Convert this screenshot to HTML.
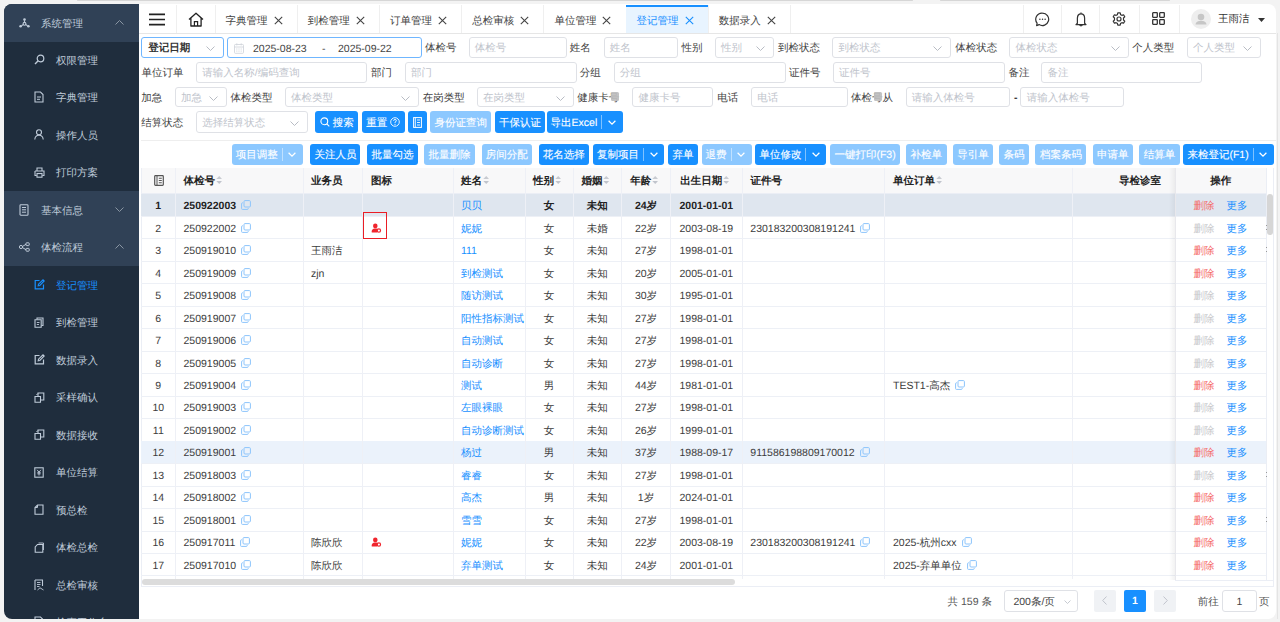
<!DOCTYPE html><html><head><meta charset="utf-8"><title>登记管理</title><style>
*{box-sizing:border-box;margin:0;padding:0}
html,body{width:1280px;height:622px;overflow:hidden}
body{position:relative;background:#f3f3f3;font-family:"Liberation Sans",sans-serif;font-size:10.5px;text-rendering:geometricPrecision;color:#606266}
.a{position:absolute}
.t{position:absolute;white-space:nowrap;line-height:12px;margin-top:1px}
svg{display:block}
.side{left:4px;top:4px;width:135px;height:615px;background:#1f2d3d;border-radius:8px 0 0 8px;overflow:hidden}
.sh{position:absolute;left:0;width:135px;height:37.5px;background:#304156}
.sm{color:#bfcbd9}
.main{left:139px;top:4px;width:1137px;height:615px;background:#fff;border-radius:0 8px 8px 0;overflow:hidden}
.vsep{position:absolute;top:1px;width:1px;height:28px;background:#efefef}
.tabt{color:#444}
.lbl{color:#444}
.inp{position:absolute;border:1px solid #dfe1e6;border-radius:3px;background:#fff}
.ph{color:#c0c4cc}
.btn{position:absolute;background:#1890ff;border-radius:3px;color:#fff;-webkit-text-stroke:0.12px #fff}
.btn.dis{background:#8cc8ff}
.th{color:#222;font-weight:bold}
.td{color:#3c3c3c}
.lnk{color:#1890ff}
</style></head><body>
<div class="a " style="left:77px;top:0px;width:836px;height:1.3px;background:#d6d6d6;border-radius:1px"></div>
<div class="a " style="left:940px;top:0px;width:230px;height:1.3px;background:#d6d6d6;border-radius:1px"></div>
<div class="a side"><div class="sh" style="top:0px"></div><div class="a" style="left:15px;top:12.75px;height:12px;display:flex;align-items:center"><svg width="11" height="10" viewBox="0 0 11 10"><circle cx="5.5" cy="1.6" r="1.3" fill="#bfcbd9"/><circle cx="1.6" cy="8.2" r="1.3" fill="#bfcbd9"/><circle cx="9.4" cy="8.2" r="1.3" fill="#bfcbd9"/><circle cx="5.5" cy="5.8" r="1.4" fill="none" stroke="#bfcbd9" stroke-width="1.1"/><path d="M5.5 2.5V4.4M4.4 6.6L2.4 7.7M6.6 6.6L8.6 7.7" stroke="#bfcbd9" stroke-width="1.1"/></svg></div><div class="t sm" style="left:37px;top:12.75px;">系统管理</div><div class="a" style="left:111px;top:15.75px"><svg width="9" height="5" viewBox="0 0 9 5"><path d="M0.5 4.5L4.5 0.5L8.5 4.5" fill="none" stroke="#8a96a3" stroke-width="1"/></svg></div><div class="a" style="left:30px;top:49.75px;height:12px;display:flex;align-items:center"><svg width="11" height="11" viewBox="0 0 11 11"><circle cx="6.5" cy="4.5" r="3.3" fill="none" stroke="#bfcbd9" stroke-width="1.2"/><path d="M4.2 6.8L1 10" stroke="#bfcbd9" stroke-width="1.4"/></svg></div><div class="t sm" style="left:52px;top:49.75px;">权限管理</div><div class="a" style="left:30px;top:87.25px;height:12px;display:flex;align-items:center"><svg width="10" height="12" viewBox="0 0 10 12"><path d="M1 1H6.5L9 3.5V11H1Z" fill="none" stroke="#bfcbd9" stroke-width="1.1"/><path d="M3 6H7M3 8.3H6" stroke="#bfcbd9" stroke-width="1"/></svg></div><div class="t sm" style="left:52px;top:87.25px;">字典管理</div><div class="a" style="left:30px;top:124.75px;height:12px;display:flex;align-items:center"><svg width="10" height="11" viewBox="0 0 10 11"><circle cx="5" cy="3.3" r="2.5" fill="none" stroke="#bfcbd9" stroke-width="1.1"/><path d="M0.8 10.5C1 7.5 2.8 6.3 5 6.3S9 7.5 9.2 10.5" fill="none" stroke="#bfcbd9" stroke-width="1.1"/></svg></div><div class="t sm" style="left:52px;top:124.75px;">操作人员</div><div class="a" style="left:30px;top:162.25px;height:12px;display:flex;align-items:center"><svg width="11" height="11" viewBox="0 0 11 11"><path d="M3 3.5V1H8V3.5M1 4H10V8.5H8.3M2.7 8.5H1V4" fill="none" stroke="#bfcbd9" stroke-width="1.1"/><rect x="3" y="6.5" width="5" height="3.7" fill="none" stroke="#bfcbd9" stroke-width="1.1"/></svg></div><div class="t sm" style="left:52px;top:162.25px;">打印方案</div><div class="sh" style="top:187px"></div><div class="a" style="left:15px;top:199.75px;height:12px;display:flex;align-items:center"><svg width="10" height="12" viewBox="0 0 10 12"><rect x="1" y="0.8" width="8" height="10.4" rx="0.8" fill="none" stroke="#bfcbd9" stroke-width="1.1"/><path d="M3 3.5H7M3 5.8H7M3 8.2H7" stroke="#bfcbd9" stroke-width="1"/></svg></div><div class="t sm" style="left:37px;top:199.75px;">基本信息</div><div class="a" style="left:111px;top:202.75px"><svg width="9" height="5" viewBox="0 0 9 5"><path d="M0.5 0.5L4.5 4.5L8.5 0.5" fill="none" stroke="#8a96a3" stroke-width="1"/></svg></div><div class="sh" style="top:224.5px"></div><div class="a" style="left:15px;top:237.25px;height:12px;display:flex;align-items:center"><svg width="11" height="10" viewBox="0 0 11 10"><circle cx="2" cy="5" r="1.6" fill="none" stroke="#bfcbd9" stroke-width="1"/><rect x="7" y="0.8" width="3.2" height="2.8" rx="0.6" fill="none" stroke="#bfcbd9" stroke-width="1"/><rect x="7" y="6.4" width="3.2" height="2.8" rx="0.6" fill="none" stroke="#bfcbd9" stroke-width="1"/><path d="M3.5 4.4L7 2.3M3.5 5.6L7 7.7" stroke="#bfcbd9" stroke-width="1"/></svg></div><div class="t sm" style="left:37px;top:237.25px;">体检流程</div><div class="a" style="left:111px;top:240.25px"><svg width="9" height="5" viewBox="0 0 9 5"><path d="M0.5 4.5L4.5 0.5L8.5 4.5" fill="none" stroke="#8a96a3" stroke-width="1"/></svg></div><div class="a" style="left:30px;top:274.75px;height:12px;display:flex;align-items:center"><svg width="11" height="11" viewBox="0 0 11 11"><path d="M5.5 1.5H1.2V9.8H9.5V5.5" fill="none" stroke="#1890ff" stroke-width="1.2"/><path d="M4.2 6.8L4.5 5.2L9 0.8L10.2 2L5.8 6.5Z" fill="none" stroke="#1890ff" stroke-width="1.1"/></svg></div><div class="t sm" style="left:52px;top:274.75px;color:#1890ff;">登记管理</div><div class="a" style="left:30px;top:312.25px;height:12px;display:flex;align-items:center"><svg width="10" height="11" viewBox="0 0 10 11"><path d="M3 2.5V1H9V8.5H7.5" fill="none" stroke="#bfcbd9" stroke-width="1.1"/><path d="M1 2.8H7.2V10.2H1Z" fill="none" stroke="#bfcbd9" stroke-width="1.1"/><path d="M2.8 5.5H5.5M2.8 7.5H5" stroke="#bfcbd9" stroke-width="0.9"/></svg></div><div class="t sm" style="left:52px;top:312.25px;">到检管理</div><div class="a" style="left:30px;top:349.75px;height:12px;display:flex;align-items:center"><svg width="11" height="11" viewBox="0 0 11 11"><path d="M5.5 1.5H1.2V9.8H9.5V5.5" fill="none" stroke="#bfcbd9" stroke-width="1.2"/><path d="M4.2 6.8L4.5 5.2L9 0.8L10.2 2L5.8 6.5Z" fill="none" stroke="#bfcbd9" stroke-width="1.1"/></svg></div><div class="t sm" style="left:52px;top:349.75px;">数据录入</div><div class="a" style="left:30px;top:387.25px;height:12px;display:flex;align-items:center"><svg width="11" height="11" viewBox="0 0 11 11"><path d="M1 4.5H6.5V10.2H1Z" fill="none" stroke="#bfcbd9" stroke-width="1.1"/><path d="M4 4.5V1H9.8V8H6.5" fill="none" stroke="#bfcbd9" stroke-width="1.1"/><path d="M2.5 3L3.8 1.5" stroke="#bfcbd9" stroke-width="1"/></svg></div><div class="t sm" style="left:52px;top:387.25px;">采样确认</div><div class="a" style="left:30px;top:424.75px;height:12px;display:flex;align-items:center"><svg width="11" height="11" viewBox="0 0 11 11"><path d="M1 4.5H6.5V10.2H1Z" fill="none" stroke="#bfcbd9" stroke-width="1.1"/><path d="M4 4.5V1H9.8V8H6.5" fill="none" stroke="#bfcbd9" stroke-width="1.1"/><path d="M2.5 3L3.8 1.5" stroke="#bfcbd9" stroke-width="1"/></svg></div><div class="t sm" style="left:52px;top:424.75px;">数据接收</div><div class="a" style="left:30px;top:462.25px;height:12px;display:flex;align-items:center"><svg width="10" height="11" viewBox="0 0 10 11"><rect x="0.8" y="0.8" width="8.4" height="9.4" fill="none" stroke="#bfcbd9" stroke-width="1.1"/><path d="M3 2.8L5 5L7 2.8M5 5V8.5M3.3 5.3H6.7M3.3 6.8H6.7" fill="none" stroke="#bfcbd9" stroke-width="0.9"/></svg></div><div class="t sm" style="left:52px;top:462.25px;">单位结算</div><div class="a" style="left:30px;top:499.75px;height:12px;display:flex;align-items:center"><svg width="10" height="11" viewBox="0 0 10 11"><path d="M3.5 1H9V10.2H1V3.5Z" fill="none" stroke="#bfcbd9" stroke-width="1.1"/><path d="M3.5 1V3.5H1" fill="none" stroke="#bfcbd9" stroke-width="1"/></svg></div><div class="t sm" style="left:52px;top:499.75px;">预总检</div><div class="a" style="left:30px;top:537.25px;height:12px;display:flex;align-items:center"><svg width="10" height="11" viewBox="0 0 10 11"><path d="M3.5 2.5H8.8V10.2H1.2V5Z" fill="none" stroke="#bfcbd9" stroke-width="1.1"/><path d="M4.5 1H9.5V8" fill="none" stroke="#bfcbd9" stroke-width="0.9"/></svg></div><div class="t sm" style="left:52px;top:537.25px;">体检总检</div><div class="a" style="left:30px;top:574.75px;height:12px;display:flex;align-items:center"><svg width="10" height="12" viewBox="0 0 10 12"><path d="M1 1H8.5V7M1 1V11" fill="none" stroke="#bfcbd9" stroke-width="1.1"/><path d="M3 3.5H6.5M3 5.5H6.5M3 7.5H5.5M3.5 11L6 8.8L9.5 11" fill="none" stroke="#bfcbd9" stroke-width="0.9"/></svg></div><div class="t sm" style="left:52px;top:574.75px;">总检审核</div><div class="a" style="left:30px;top:612.25px;height:12px;display:flex;align-items:center"><svg width="10" height="12" viewBox="0 0 10 12"><path d="M1 1H6.5L9 3.5V11H1Z" fill="none" stroke="#bfcbd9" stroke-width="1.1"/><path d="M3 6H7M3 8.3H6" stroke="#bfcbd9" stroke-width="1"/></svg></div><div class="t sm" style="left:52px;top:612.25px;">检查工作台</div></div>
<div class="a main"><div class="a " style="left:0px;top:29px;width:1137px;height:1px;background:#e6e6e6"></div><div class="vsep" style="left:37.30000000000001px"></div><div class="vsep" style="left:75.5px"></div><div class="vsep" style="left:157.7px"></div><div class="vsep" style="left:239.89999999999998px"></div><div class="vsep" style="left:322.1px"></div><div class="vsep" style="left:404.29999999999995px"></div><div class="vsep" style="left:486.5px"></div><div class="vsep" style="left:568.7px"></div><div class="vsep" style="left:650.9px"></div><div class="vsep" style="left:883.5px"></div><div class="vsep" style="left:922px"></div><div class="vsep" style="left:960px"></div><div class="vsep" style="left:999.8px"></div><div class="vsep" style="left:1040px"></div><div class="a " style="left:10px;top:9px;width:16px;height:13px;"><svg width="16" height="13" viewBox="0 0 16 13"><path d="M0 1.3H16M0 6.5H16M0 11.7H16" stroke="#222" stroke-width="1.7"/></svg></div><div class="a " style="left:48.5px;top:7.5px;width:16px;height:15px;"><svg width="16" height="15" viewBox="0 0 16 15"><path d="M1 7.5L8 1.2L15 7.5M2.9 5.8V14H13.1V5.8" fill="none" stroke="#222" stroke-width="1.3" stroke-linejoin="round"/><path d="M6.4 14V9.6H9.6V14" fill="none" stroke="#222" stroke-width="1.2"/></svg></div><div class="t " style="left:86.6px;top:9.5px;color:#444">字典管理</div><div class="a " style="left:134.6px;top:11.5px;width:9px;height:9px;"><svg width="9" height="9" viewBox="0 0 9 9"><path d="M0.8 0.8L8.2 8.2M8.2 0.8L0.8 8.2" stroke="#444" stroke-width="1.1"/></svg></div><div class="t " style="left:168.8px;top:9.5px;color:#444">到检管理</div><div class="a " style="left:216.8px;top:11.5px;width:9px;height:9px;"><svg width="9" height="9" viewBox="0 0 9 9"><path d="M0.8 0.8L8.2 8.2M8.2 0.8L0.8 8.2" stroke="#444" stroke-width="1.1"/></svg></div><div class="t " style="left:251.0px;top:9.5px;color:#444">订单管理</div><div class="a " style="left:299.0px;top:11.5px;width:9px;height:9px;"><svg width="9" height="9" viewBox="0 0 9 9"><path d="M0.8 0.8L8.2 8.2M8.2 0.8L0.8 8.2" stroke="#444" stroke-width="1.1"/></svg></div><div class="t " style="left:333.2px;top:9.5px;color:#444">总检审核</div><div class="a " style="left:381.2px;top:11.5px;width:9px;height:9px;"><svg width="9" height="9" viewBox="0 0 9 9"><path d="M0.8 0.8L8.2 8.2M8.2 0.8L0.8 8.2" stroke="#444" stroke-width="1.1"/></svg></div><div class="t " style="left:415.4px;top:9.5px;color:#444">单位管理</div><div class="a " style="left:463.4px;top:11.5px;width:9px;height:9px;"><svg width="9" height="9" viewBox="0 0 9 9"><path d="M0.8 0.8L8.2 8.2M8.2 0.8L0.8 8.2" stroke="#444" stroke-width="1.1"/></svg></div><div class="a " style="left:487px;top:0.5px;width:82.2px;height:28.5px;background:#e8f4ff"></div><div class="a " style="left:487px;top:0.5px;width:82.2px;height:2px;background:#1890ff"></div><div class="t " style="left:497.6px;top:9.5px;color:#1890ff">登记管理</div><div class="a " style="left:545.6px;top:11.5px;width:9px;height:9px;"><svg width="9" height="9" viewBox="0 0 9 9"><path d="M0.8 0.8L8.2 8.2M8.2 0.8L0.8 8.2" stroke="#1890ff" stroke-width="1.1"/></svg></div><div class="t " style="left:579.8px;top:9.5px;color:#444">数据录入</div><div class="a " style="left:627.8px;top:11.5px;width:9px;height:9px;"><svg width="9" height="9" viewBox="0 0 9 9"><path d="M0.8 0.8L8.2 8.2M8.2 0.8L0.8 8.2" stroke="#444" stroke-width="1.1"/></svg></div><div class="a " style="left:895.5px;top:7.5px;width:15px;height:15px;"><svg width="15" height="15" viewBox="0 0 15 15"><path d="M7.5 1.1A6.3 6.2 0 1 1 4.1 12.6L1.6 13.6L2.1 11.1A6.2 6.2 0 0 1 7.5 1.1Z" fill="none" stroke="#333" stroke-width="1.2" stroke-linejoin="round"/><circle cx="4.9" cy="7.3" r="0.75" fill="#333"/><circle cx="7.5" cy="7.3" r="0.75" fill="#333"/><circle cx="10.1" cy="7.3" r="0.75" fill="#333"/></svg></div><div class="a " style="left:936px;top:8px;width:12px;height:15px;"><svg width="12" height="15" viewBox="0 0 12 15"><path d="M6 1.8C3.7 1.8 2.4 3.8 2.4 6.2V11.2L1 12.6H11L9.6 11.2V6.2C9.6 3.8 8.3 1.8 6 1.8Z" fill="none" stroke="#333" stroke-width="1.25" stroke-linejoin="round"/><path d="M6 0.6V1.8" stroke="#333" stroke-width="1.2"/><path d="M4.6 13.4Q6 14.8 7.4 13.4Z" fill="#333" stroke="#333" stroke-width="0.8"/></svg></div><div class="a " style="left:972.8px;top:7.5px;width:14px;height:14px;"><svg width="14" height="14" viewBox="0 0 16 16"><path d="M6.6 1H9.4L9.8 3A5.2 5.2 0 0 1 11.3 3.9L13.2 3.2L14.6 5.6L13.1 6.9A5.2 5.2 0 0 1 13.1 9.1L14.6 10.4L13.2 12.8L11.3 12.1A5.2 5.2 0 0 1 9.8 13L9.4 15H6.6L6.2 13A5.2 5.2 0 0 1 4.7 12.1L2.8 12.8L1.4 10.4L2.9 9.1A5.2 5.2 0 0 1 2.9 6.9L1.4 5.6L2.8 3.2L4.7 3.9A5.2 5.2 0 0 1 6.2 3Z" fill="none" stroke="#333" stroke-width="1.35" stroke-linejoin="round"/><circle cx="8" cy="8" r="2.3" fill="none" stroke="#333" stroke-width="1.35"/></svg></div><div class="a " style="left:1013.3px;top:8.3px;width:13px;height:13px;"><svg width="13" height="13" viewBox="0 0 13 13"><rect x="0.7" y="0.7" width="4.6" height="4.6" rx="0.5" fill="none" stroke="#333" stroke-width="1.3"/><rect x="7.7" y="0.7" width="4.6" height="4.6" rx="0.5" fill="none" stroke="#333" stroke-width="1.3"/><rect x="0.7" y="7.7" width="4.6" height="4.6" rx="0.5" fill="none" stroke="#333" stroke-width="1.3"/><rect x="7.7" y="7.7" width="4.6" height="4.6" rx="0.5" fill="none" stroke="#333" stroke-width="1.3"/></svg></div><div class="a " style="left:1052px;top:5px;width:20px;height:20px;border-radius:50%;background:#eeeeee;overflow:hidden"><svg width="20" height="20" viewBox="0 0 20 20"><circle cx="10" cy="8" r="3.3" fill="#c6c6c6"/><path d="M4.5 15.5Q5 11.8 10 11.8T15.5 15.5Z" fill="#c6c6c6"/></svg></div><div class="t " style="left:1079px;top:8.3px;color:#333">王雨洁</div><div class="a " style="left:1118.5px;top:13.5px;width:7px;height:4px;"><svg width="7" height="4" viewBox="0 0 7 4"><path d="M0 0H7L3.5 4Z" fill="#333"/></svg></div><div class="inp" style="left:2.2px;top:33.2px;width:82.8px;height:20.5px;border-color:#6fb6ff"><div class="t" style="left:6px;top:3.25px;color:#333;font-weight:bold;">登记日期</div><div class="a" style="right:8px;top:8.25px"><svg width="9" height="5" viewBox="0 0 9 5"><path d="M0.5 0.5L4.5 4.5L8.5 0.5" fill="none" stroke="#b8bcc4" stroke-width="1"/></svg></div></div><div class="inp" style="left:88px;top:33.2px;width:194.5px;height:20.5px;border-color:#6fb6ff"><div class="a" style="left:5.6px;top:4.6px"><svg width="10" height="11" viewBox="0 0 10 11"><rect x="0.5" y="1.5" width="9" height="8.8" rx="0.8" fill="none" stroke="#d3d6dc" stroke-width="0.9"/><path d="M0.5 4H9.5M2.8 0.3V2.4M7.2 0.3V2.4" stroke="#d3d6dc" stroke-width="0.9"/><path d="M2.2 6H3.4M4.4 6H5.6M6.6 6H7.8M2.2 8.1H3.4M4.4 8.1H5.6M6.6 8.1H7.8" stroke="#d3d6dc" stroke-width="0.9"/></svg></div><div class="t" style="left:25px;top:3.5px;color:#444">2025-08-23</div><div class="t" style="left:94px;top:3.5px;color:#444">-</div><div class="t" style="left:110px;top:3.5px;color:#444">2025-09-22</div></div><div class="t lbl" style="left:286px;top:37.45px;">体检号</div><div class="inp" style="left:329.5px;top:33.2px;width:98.0px;height:20.5px;border-color:#dfe1e6"><div class="t ph" style="left:5.3px;top:3.25px">体检号</div></div><div class="t lbl" style="left:430.8px;top:37.45px;">姓名</div><div class="inp" style="left:464.5px;top:33.2px;width:74.3px;height:20.5px;border-color:#dfe1e6"><div class="t ph" style="left:5.3px;top:3.25px">姓名</div></div><div class="t lbl" style="left:542.5px;top:37.45px;">性别</div><div class="inp" style="left:575.8px;top:33.2px;width:59.5px;height:20.5px;border-color:#dfe1e6"><div class="t ph" style="left:5.3px;top:3.25px">性别</div><div class="a" style="right:8px;top:8.25px"><svg width="9" height="5" viewBox="0 0 9 5"><path d="M0.5 0.5L4.5 4.5L8.5 0.5" fill="none" stroke="#b8bcc4" stroke-width="1"/></svg></div></div><div class="t lbl" style="left:639px;top:37.45px;">到检状态</div><div class="inp" style="left:693.3px;top:33.2px;width:119.2px;height:20.5px;border-color:#dfe1e6"><div class="t ph" style="left:5.3px;top:3.25px">到检状态</div><div class="a" style="right:8px;top:8.25px"><svg width="9" height="5" viewBox="0 0 9 5"><path d="M0.5 0.5L4.5 4.5L8.5 0.5" fill="none" stroke="#b8bcc4" stroke-width="1"/></svg></div></div><div class="t lbl" style="left:816.3px;top:37.45px;">体检状态</div><div class="inp" style="left:870.3px;top:33.2px;width:119.9px;height:20.5px;border-color:#dfe1e6"><div class="t ph" style="left:5.3px;top:3.25px">体检状态</div><div class="a" style="right:8px;top:8.25px"><svg width="9" height="5" viewBox="0 0 9 5"><path d="M0.5 0.5L4.5 4.5L8.5 0.5" fill="none" stroke="#b8bcc4" stroke-width="1"/></svg></div></div><div class="t lbl" style="left:993.3px;top:37.45px;">个人类型</div><div class="inp" style="left:1047.7px;top:33.2px;width:74.3px;height:20.5px;border-color:#dfe1e6"><div class="t ph" style="left:5.3px;top:3.25px">个人类型</div><div class="a" style="right:8px;top:8.25px"><svg width="9" height="5" viewBox="0 0 9 5"><path d="M0.5 0.5L4.5 4.5L8.5 0.5" fill="none" stroke="#b8bcc4" stroke-width="1"/></svg></div></div><div class="t lbl" style="left:2.4px;top:62.45px;">单位订单</div><div class="inp" style="left:57px;top:58.2px;width:171.3px;height:20.5px;border-color:#dfe1e6"><div class="t ph" style="left:5.3px;top:3.25px">请输入名称/编码查询</div></div><div class="t lbl" style="left:232px;top:62.45px;">部门</div><div class="inp" style="left:265.8px;top:58.2px;width:172.0px;height:20.5px;border-color:#dfe1e6"><div class="t ph" style="left:5.3px;top:3.25px">部门</div></div><div class="t lbl" style="left:440.8px;top:62.45px;">分组</div><div class="inp" style="left:474.5px;top:58.2px;width:172.0px;height:20.5px;border-color:#dfe1e6"><div class="t ph" style="left:5.3px;top:3.25px">分组</div></div><div class="t lbl" style="left:650px;top:62.45px;">证件号</div><div class="inp" style="left:693.8px;top:58.2px;width:172.5px;height:20.5px;border-color:#dfe1e6"><div class="t ph" style="left:5.3px;top:3.25px">证件号</div></div><div class="t lbl" style="left:869.5px;top:62.45px;">备注</div><div class="inp" style="left:902.3px;top:58.2px;width:161.1px;height:20.5px;border-color:#dfe1e6"><div class="t ph" style="left:5.3px;top:3.25px">备注</div></div><div class="t lbl" style="left:2.2px;top:86.75px;">加急</div><div class="inp" style="left:35.8px;top:82.5px;width:52.5px;height:20.5px;border-color:#dfe1e6"><div class="t ph" style="left:5.3px;top:3.25px">加急</div><div class="a" style="right:8px;top:8.25px"><svg width="9" height="5" viewBox="0 0 9 5"><path d="M0.5 0.5L4.5 4.5L8.5 0.5" fill="none" stroke="#b8bcc4" stroke-width="1"/></svg></div></div><div class="t lbl" style="left:91.5px;top:86.75px;">体检类型</div><div class="inp" style="left:145.8px;top:82.5px;width:134.2px;height:20.5px;border-color:#dfe1e6"><div class="t ph" style="left:5.3px;top:3.25px">体检类型</div><div class="a" style="right:8px;top:8.25px"><svg width="9" height="5" viewBox="0 0 9 5"><path d="M0.5 0.5L4.5 4.5L8.5 0.5" fill="none" stroke="#b8bcc4" stroke-width="1"/></svg></div></div><div class="t lbl" style="left:283.8px;top:86.75px;">在岗类型</div><div class="inp" style="left:337.8px;top:82.5px;width:97.5px;height:20.5px;border-color:#dfe1e6"><div class="t ph" style="left:5.3px;top:3.25px">在岗类型</div><div class="a" style="right:8px;top:8.25px"><svg width="9" height="5" viewBox="0 0 9 5"><path d="M0.5 0.5L4.5 4.5L8.5 0.5" fill="none" stroke="#b8bcc4" stroke-width="1"/></svg></div></div><div class="t lbl" style="left:438.3px;top:86.75px;">健康卡号</div><div class="inp" style="left:493.3px;top:82.5px;width:81.2px;height:20.5px;border-color:#dfe1e6"><div class="t ph" style="left:5.3px;top:3.25px">健康卡号</div></div><div class="a " style="left:471.8px;top:88.3px;width:8.5px;height:9px;background:rgba(190,190,190,0.92);border-radius:1.5px"></div><div class="t lbl" style="left:578.3px;top:86.75px;">电话</div><div class="inp" style="left:612px;top:82.5px;width:96.8px;height:20.5px;border-color:#dfe1e6"><div class="t ph" style="left:5.3px;top:3.25px">电话</div></div><div class="t lbl" style="left:712px;top:86.75px;">体检号从</div><div class="inp" style="left:766.5px;top:82.5px;width:104.8px;height:20.5px;border-color:#dfe1e6"><div class="t ph" style="left:5.3px;top:3.25px">请输入体检号</div></div><div class="a " style="left:734.9px;top:88.3px;width:8.5px;height:9px;background:rgba(190,190,190,0.92);border-radius:1.5px"></div><div class="t " style="left:875px;top:86.75px;color:#333;font-weight:bold">-</div><div class="inp" style="left:881.4px;top:82.5px;width:104.1px;height:20.5px;border-color:#dfe1e6"><div class="t ph" style="left:5.3px;top:3.25px">请输入体检号</div></div><div class="t lbl" style="left:2.2px;top:112.05px;">结算状态</div><div class="inp" style="left:57px;top:107.3px;width:111.8px;height:21.5px;border-color:#dfe1e6"><div class="t ph" style="left:5.3px;top:3.75px">选择结算状态</div><div class="a" style="right:8px;top:8.75px"><svg width="9" height="5" viewBox="0 0 9 5"><path d="M0.5 0.5L4.5 4.5L8.5 0.5" fill="none" stroke="#b8bcc4" stroke-width="1"/></svg></div></div><div class="btn" style="left:175.8px;top:107.3px;width:43.7px;height:21.5px"><div class="t" style="left:0;width:43.69999999999999px;text-align:center;top:4.75px"><span style="display:inline-block;vertical-align:-1px;margin-right:3px"><svg width="10" height="10" viewBox="0 0 10 10"><circle cx="4.3" cy="4.3" r="3.4" fill="none" stroke="#fff" stroke-width="1.1"/><path d="M6.8 6.8L9.3 9.3" stroke="#fff" stroke-width="1.1"/></svg></span>搜索</div></div><div class="btn" style="left:222.5px;top:107.3px;width:43.3px;height:21.5px"><div class="t" style="left:0;width:43.30000000000001px;text-align:center;top:4.75px">重置<span style="display:inline-block;vertical-align:-1px;margin-left:3px"><svg width="10" height="10" viewBox="0 0 10 10"><circle cx="5" cy="5" r="4.3" fill="none" stroke="#fff" stroke-width="0.9"/><path d="M3.6 3.8Q3.6 2.5 5 2.5T6.4 3.7Q6.4 4.5 5 5.2V6.2" fill="none" stroke="#fff" stroke-width="0.9"/><circle cx="5" cy="7.6" r="0.55" fill="#fff"/></svg></span></div></div><div class="btn" style="left:269px;top:107.3px;width:19.3px;height:21.5px"><div class="t" style="left:0;width:19.30000000000001px;text-align:center;top:4.75px"><span style="display:inline-block;vertical-align:-1px"><svg width="9" height="11" viewBox="0 0 9 11"><rect x="0.6" y="0.6" width="7.8" height="9.8" fill="none" stroke="#fff" stroke-width="1"/><path d="M2.3 0.6V10.4M4 3H7M4 5.5H7M4 8H7" stroke="#fff" stroke-width="0.9"/></svg></span></div></div><div class="btn dis" style="left:291.3px;top:107.3px;width:60.7px;height:21.5px"><div class="t" style="left:0;width:60.69999999999999px;text-align:center;top:4.75px">身份证查询</div></div><div class="btn" style="left:356px;top:107.3px;width:49.8px;height:21.5px"><div class="t" style="left:0;width:49.799999999999955px;text-align:center;top:4.75px">干保认证</div></div><div class="btn" style="left:407.8px;top:107.3px;width:76.0px;height:21.5px"><div class="a" style="left:54.200000000000045px;top:4px;width:1px;height:13.5px;background:rgba(255,255,255,0.45)"></div><div class="a" style="left:61.10000000000002px;top:8.55px"><svg width="8" height="5" viewBox="0 0 8 5"><path d="M0.6 0.7L4 4.1L7.4 0.7" fill="none" stroke="#fff" stroke-width="1.25"/></svg></div><div class="t" style="left:0;width:54.200000000000045px;text-align:center;top:4.75px">导出Excel</div></div><div class="a " style="left:2px;top:135.6px;width:1135px;height:1px;background:#eeeeee"></div><div class="btn dis" style="left:92.5px;top:140.2px;width:71.5px;height:20.4px"><div class="a" style="left:50.30000000000001px;top:4px;width:1px;height:12.399999999999999px;background:rgba(255,255,255,0.45)"></div><div class="a" style="left:56.900000000000006px;top:7.999999999999999px"><svg width="8" height="5" viewBox="0 0 8 5"><path d="M0.6 0.7L4 4.1L7.4 0.7" fill="none" stroke="#fff" stroke-width="1.25"/></svg></div><div class="t" style="left:0;width:50.30000000000001px;text-align:center;top:4.199999999999999px">项目调整</div></div><div class="btn" style="left:171.3px;top:140.2px;width:50.2px;height:20.4px"><div class="t" style="left:0;width:50.19999999999999px;text-align:center;top:4.199999999999999px">关注人员</div></div><div class="btn" style="left:228.3px;top:140.2px;width:50.5px;height:20.4px"><div class="t" style="left:0;width:50.5px;text-align:center;top:4.199999999999999px">批量勾选</div></div><div class="btn dis" style="left:285.3px;top:140.2px;width:50.5px;height:20.4px"><div class="t" style="left:0;width:50.5px;text-align:center;top:4.199999999999999px">批量删除</div></div><div class="btn dis" style="left:342.5px;top:140.2px;width:50.3px;height:20.4px"><div class="t" style="left:0;width:50.299999999999955px;text-align:center;top:4.199999999999999px">房间分配</div></div><div class="btn" style="left:399.5px;top:140.2px;width:50.5px;height:20.4px"><div class="t" style="left:0;width:50.5px;text-align:center;top:4.199999999999999px">花名选择</div></div><div class="btn" style="left:454px;top:140.2px;width:71.3px;height:20.4px"><div class="a" style="left:50px;top:4px;width:1px;height:12.399999999999999px;background:rgba(255,255,255,0.45)"></div><div class="a" style="left:56.64999999999998px;top:7.999999999999999px"><svg width="8" height="5" viewBox="0 0 8 5"><path d="M0.6 0.7L4 4.1L7.4 0.7" fill="none" stroke="#fff" stroke-width="1.25"/></svg></div><div class="t" style="left:0;width:50px;text-align:center;top:4.199999999999999px">复制项目</div></div><div class="btn" style="left:529px;top:140.2px;width:29.8px;height:20.4px"><div class="t" style="left:0;width:29.799999999999955px;text-align:center;top:4.199999999999999px">弃单</div></div><div class="btn dis" style="left:562.5px;top:140.2px;width:50.0px;height:20.4px"><div class="a" style="left:29.0px;top:4px;width:1px;height:12.399999999999999px;background:rgba(255,255,255,0.45)"></div><div class="a" style="left:35.5px;top:7.999999999999999px"><svg width="8" height="5" viewBox="0 0 8 5"><path d="M0.6 0.7L4 4.1L7.4 0.7" fill="none" stroke="#fff" stroke-width="1.25"/></svg></div><div class="t" style="left:0;width:29.0px;text-align:center;top:4.199999999999999px">退费</div></div><div class="btn" style="left:616.3px;top:140.2px;width:70.7px;height:20.4px"><div class="a" style="left:50.200000000000045px;top:4px;width:1px;height:12.399999999999999px;background:rgba(255,255,255,0.45)"></div><div class="a" style="left:56.450000000000045px;top:7.999999999999999px"><svg width="8" height="5" viewBox="0 0 8 5"><path d="M0.6 0.7L4 4.1L7.4 0.7" fill="none" stroke="#fff" stroke-width="1.25"/></svg></div><div class="t" style="left:0;width:50.200000000000045px;text-align:center;top:4.199999999999999px">单位修改</div></div><div class="btn dis" style="left:691.3px;top:140.2px;width:69.5px;height:20.4px"><div class="t" style="left:0;width:69.5px;text-align:center;top:4.199999999999999px">一键打印(F3)</div></div><div class="btn dis" style="left:767px;top:140.2px;width:40.5px;height:20.4px"><div class="t" style="left:0;width:40.5px;text-align:center;top:4.199999999999999px">补检单</div></div><div class="btn dis" style="left:813.8px;top:140.2px;width:40.2px;height:20.4px"><div class="t" style="left:0;width:40.200000000000045px;text-align:center;top:4.199999999999999px">导引单</div></div><div class="btn dis" style="left:860.3px;top:140.2px;width:29.4px;height:20.4px"><div class="t" style="left:0;width:29.40000000000009px;text-align:center;top:4.199999999999999px">条码</div></div><div class="btn dis" style="left:896.4px;top:140.2px;width:51.1px;height:20.4px"><div class="t" style="left:0;width:51.09999999999991px;text-align:center;top:4.199999999999999px">档案条码</div></div><div class="btn dis" style="left:953.9px;top:140.2px;width:39.9px;height:20.4px"><div class="t" style="left:0;width:39.899999999999864px;text-align:center;top:4.199999999999999px">申请单</div></div><div class="btn dis" style="left:1000.4px;top:140.2px;width:40.2px;height:20.4px"><div class="t" style="left:0;width:40.19999999999982px;text-align:center;top:4.199999999999999px">结算单</div></div><div class="btn" style="left:1044.4px;top:140.2px;width:90.2px;height:20.4px"><div class="a" style="left:69.29999999999995px;top:4px;width:1px;height:12.399999999999999px;background:rgba(255,255,255,0.45)"></div><div class="a" style="left:75.74999999999989px;top:7.999999999999999px"><svg width="8" height="5" viewBox="0 0 8 5"><path d="M0.6 0.7L4 4.1L7.4 0.7" fill="none" stroke="#fff" stroke-width="1.25"/></svg></div><div class="t" style="left:0;width:69.29999999999995px;text-align:center;top:4.199999999999999px">来检登记(F1)</div></div><div class="a " style="left:2.4px;top:163.6px;width:1124.6px;height:26.4px;background:#f8f8f9"></div><div class="a " style="left:2.4px;top:189.0px;width:1124.6px;height:1px;background:#ebeef5"></div><div class="a " style="left:2.4px;top:163.6px;width:1px;height:418.4px;background:#ebeef5"></div><div class="a " style="left:2.4px;top:190.0px;width:1124.6px;height:22.47px;background:#dfe6ef"></div><div class="a " style="left:2.4px;top:212px;width:1124.6px;height:1px;background:#edf0f6"></div><div class="t th" style="left:2.4000000000000057px;width:33.79999999999998px;text-align:center;top:195.24px">1</div><div class="t th" style="left:44.5px;top:195.24px;">250922003<span style="display:inline-block;vertical-align:-1px;margin-left:5px"><svg width="10" height="10" viewBox="0 0 10 10"><rect x="3" y="0.6" width="6.4" height="6.4" rx="1" fill="none" stroke="#8cc4fb" stroke-width="1"/><path d="M2 2.8H1.4A0.8 0.8 0 0 0 0.6 3.6V8.6A0.8 0.8 0 0 0 1.4 9.4H6.4A0.8 0.8 0 0 0 7.2 8.6V8" fill="none" stroke="#8cc4fb" stroke-width="1"/></svg></span></div><div class="t lnk" style="left:322px;top:195.24px;">贝贝</div><div class="t th" style="left:386px;width:48px;text-align:center;top:195.24px">女</div><div class="t th" style="left:434px;width:48.5px;text-align:center;top:195.24px">未知</div><div class="t th" style="left:482.5px;width:49.0px;text-align:center;top:195.24px">24岁</div><div class="t th" style="left:531.5px;width:71.70000000000005px;text-align:center;top:195.24px">2001-01-01</div><div class="t " style="left:1054.5px;top:195.24px;color:#f56c6c">删除</div><div class="t lnk" style="left:1087.6px;top:195.24px;">更多</div><div class="a " style="left:2.4px;top:234px;width:1124.6px;height:1px;background:#edf0f6"></div><div class="t td" style="left:2.4000000000000057px;width:33.79999999999998px;text-align:center;top:217.7px">2</div><div class="t td" style="left:44.5px;top:217.7px;">250922002<span style="display:inline-block;vertical-align:-1px;margin-left:5px"><svg width="10" height="10" viewBox="0 0 10 10"><rect x="3" y="0.6" width="6.4" height="6.4" rx="1" fill="none" stroke="#8cc4fb" stroke-width="1"/><path d="M2 2.8H1.4A0.8 0.8 0 0 0 0.6 3.6V8.6A0.8 0.8 0 0 0 1.4 9.4H6.4A0.8 0.8 0 0 0 7.2 8.6V8" fill="none" stroke="#8cc4fb" stroke-width="1"/></svg></span></div><div class="a " style="left:231.5px;top:218.7px;width:11px;height:10px;"><svg width="11" height="10" viewBox="0 0 11 10"><circle cx="4.3" cy="2.9" r="2.3" fill="#f0252d"/><path d="M0.6 9.2Q0.6 6.2 3.2 5.6H5.6Q7.3 6 7.4 7.2L6.2 9.4H1.2Z" fill="#f0252d"/><circle cx="7.9" cy="7.6" r="1.65" fill="#fff" stroke="#f0252d" stroke-width="1.2"/></svg></div><div class="t lnk" style="left:322px;top:217.7px;">妮妮</div><div class="t td" style="left:386px;width:48px;text-align:center;top:217.7px">女</div><div class="t td" style="left:434px;width:48.5px;text-align:center;top:217.7px">未婚</div><div class="t td" style="left:482.5px;width:49.0px;text-align:center;top:217.7px">22岁</div><div class="t td" style="left:531.5px;width:71.70000000000005px;text-align:center;top:217.7px">2003-08-19</div><div class="t td" style="left:611.3px;top:217.7px;">230183200308191241<span style="display:inline-block;vertical-align:-1px;margin-left:5px"><svg width="10" height="10" viewBox="0 0 10 10"><rect x="3" y="0.6" width="6.4" height="6.4" rx="1" fill="none" stroke="#8cc4fb" stroke-width="1"/><path d="M2 2.8H1.4A0.8 0.8 0 0 0 0.6 3.6V8.6A0.8 0.8 0 0 0 1.4 9.4H6.4A0.8 0.8 0 0 0 7.2 8.6V8" fill="none" stroke="#8cc4fb" stroke-width="1"/></svg></span></div><div class="t " style="left:1054.5px;top:217.7px;color:#c8c9cc">删除</div><div class="t lnk" style="left:1087.6px;top:217.7px;">更多</div><div class="a " style="left:2.4px;top:257px;width:1124.6px;height:1px;background:#edf0f6"></div><div class="t td" style="left:2.4000000000000057px;width:33.79999999999998px;text-align:center;top:240.18px">3</div><div class="t td" style="left:44.5px;top:240.18px;">250919010<span style="display:inline-block;vertical-align:-1px;margin-left:5px"><svg width="10" height="10" viewBox="0 0 10 10"><rect x="3" y="0.6" width="6.4" height="6.4" rx="1" fill="none" stroke="#8cc4fb" stroke-width="1"/><path d="M2 2.8H1.4A0.8 0.8 0 0 0 0.6 3.6V8.6A0.8 0.8 0 0 0 1.4 9.4H6.4A0.8 0.8 0 0 0 7.2 8.6V8" fill="none" stroke="#8cc4fb" stroke-width="1"/></svg></span></div><div class="t td" style="left:172px;top:240.18px;">王雨洁</div><div class="t lnk" style="left:322px;top:240.18px;">111</div><div class="t td" style="left:386px;width:48px;text-align:center;top:240.18px">女</div><div class="t td" style="left:434px;width:48.5px;text-align:center;top:240.18px">未知</div><div class="t td" style="left:482.5px;width:49.0px;text-align:center;top:240.18px">27岁</div><div class="t td" style="left:531.5px;width:71.70000000000005px;text-align:center;top:240.18px">1998-01-01</div><div class="t " style="left:1054.5px;top:240.18px;color:#f56c6c">删除</div><div class="t lnk" style="left:1087.6px;top:240.18px;">更多</div><div class="a " style="left:2.4px;top:279px;width:1124.6px;height:1px;background:#edf0f6"></div><div class="t td" style="left:2.4000000000000057px;width:33.79999999999998px;text-align:center;top:262.64px">4</div><div class="t td" style="left:44.5px;top:262.64px;">250919009<span style="display:inline-block;vertical-align:-1px;margin-left:5px"><svg width="10" height="10" viewBox="0 0 10 10"><rect x="3" y="0.6" width="6.4" height="6.4" rx="1" fill="none" stroke="#8cc4fb" stroke-width="1"/><path d="M2 2.8H1.4A0.8 0.8 0 0 0 0.6 3.6V8.6A0.8 0.8 0 0 0 1.4 9.4H6.4A0.8 0.8 0 0 0 7.2 8.6V8" fill="none" stroke="#8cc4fb" stroke-width="1"/></svg></span></div><div class="t td" style="left:172px;top:262.64px;">zjn</div><div class="t lnk" style="left:322px;top:262.64px;">到检测试</div><div class="t td" style="left:386px;width:48px;text-align:center;top:262.64px">女</div><div class="t td" style="left:434px;width:48.5px;text-align:center;top:262.64px">未知</div><div class="t td" style="left:482.5px;width:49.0px;text-align:center;top:262.64px">20岁</div><div class="t td" style="left:531.5px;width:71.70000000000005px;text-align:center;top:262.64px">2005-01-01</div><div class="t " style="left:1054.5px;top:262.64px;color:#f56c6c">删除</div><div class="t lnk" style="left:1087.6px;top:262.64px;">更多</div><div class="a " style="left:2.4px;top:302px;width:1124.6px;height:1px;background:#edf0f6"></div><div class="t td" style="left:2.4000000000000057px;width:33.79999999999998px;text-align:center;top:285.12px">5</div><div class="t td" style="left:44.5px;top:285.12px;">250919008<span style="display:inline-block;vertical-align:-1px;margin-left:5px"><svg width="10" height="10" viewBox="0 0 10 10"><rect x="3" y="0.6" width="6.4" height="6.4" rx="1" fill="none" stroke="#8cc4fb" stroke-width="1"/><path d="M2 2.8H1.4A0.8 0.8 0 0 0 0.6 3.6V8.6A0.8 0.8 0 0 0 1.4 9.4H6.4A0.8 0.8 0 0 0 7.2 8.6V8" fill="none" stroke="#8cc4fb" stroke-width="1"/></svg></span></div><div class="t lnk" style="left:322px;top:285.12px;">随访测试</div><div class="t td" style="left:386px;width:48px;text-align:center;top:285.12px">女</div><div class="t td" style="left:434px;width:48.5px;text-align:center;top:285.12px">未知</div><div class="t td" style="left:482.5px;width:49.0px;text-align:center;top:285.12px">30岁</div><div class="t td" style="left:531.5px;width:71.70000000000005px;text-align:center;top:285.12px">1995-01-01</div><div class="t " style="left:1054.5px;top:285.12px;color:#c8c9cc">删除</div><div class="t lnk" style="left:1087.6px;top:285.12px;">更多</div><div class="a " style="left:2.4px;top:324px;width:1124.6px;height:1px;background:#edf0f6"></div><div class="t td" style="left:2.4000000000000057px;width:33.79999999999998px;text-align:center;top:307.59px">6</div><div class="t td" style="left:44.5px;top:307.59px;">250919007<span style="display:inline-block;vertical-align:-1px;margin-left:5px"><svg width="10" height="10" viewBox="0 0 10 10"><rect x="3" y="0.6" width="6.4" height="6.4" rx="1" fill="none" stroke="#8cc4fb" stroke-width="1"/><path d="M2 2.8H1.4A0.8 0.8 0 0 0 0.6 3.6V8.6A0.8 0.8 0 0 0 1.4 9.4H6.4A0.8 0.8 0 0 0 7.2 8.6V8" fill="none" stroke="#8cc4fb" stroke-width="1"/></svg></span></div><div class="t lnk" style="left:322px;top:307.59px;">阳性指标测试</div><div class="t td" style="left:386px;width:48px;text-align:center;top:307.59px">女</div><div class="t td" style="left:434px;width:48.5px;text-align:center;top:307.59px">未知</div><div class="t td" style="left:482.5px;width:49.0px;text-align:center;top:307.59px">27岁</div><div class="t td" style="left:531.5px;width:71.70000000000005px;text-align:center;top:307.59px">1998-01-01</div><div class="t " style="left:1054.5px;top:307.59px;color:#c8c9cc">删除</div><div class="t lnk" style="left:1087.6px;top:307.59px;">更多</div><div class="a " style="left:2.4px;top:347px;width:1124.6px;height:1px;background:#edf0f6"></div><div class="t td" style="left:2.4000000000000057px;width:33.79999999999998px;text-align:center;top:330.06px">7</div><div class="t td" style="left:44.5px;top:330.06px;">250919006<span style="display:inline-block;vertical-align:-1px;margin-left:5px"><svg width="10" height="10" viewBox="0 0 10 10"><rect x="3" y="0.6" width="6.4" height="6.4" rx="1" fill="none" stroke="#8cc4fb" stroke-width="1"/><path d="M2 2.8H1.4A0.8 0.8 0 0 0 0.6 3.6V8.6A0.8 0.8 0 0 0 1.4 9.4H6.4A0.8 0.8 0 0 0 7.2 8.6V8" fill="none" stroke="#8cc4fb" stroke-width="1"/></svg></span></div><div class="t lnk" style="left:322px;top:330.06px;">自动测试</div><div class="t td" style="left:386px;width:48px;text-align:center;top:330.06px">女</div><div class="t td" style="left:434px;width:48.5px;text-align:center;top:330.06px">未知</div><div class="t td" style="left:482.5px;width:49.0px;text-align:center;top:330.06px">27岁</div><div class="t td" style="left:531.5px;width:71.70000000000005px;text-align:center;top:330.06px">1998-01-01</div><div class="t " style="left:1054.5px;top:330.06px;color:#c8c9cc">删除</div><div class="t lnk" style="left:1087.6px;top:330.06px;">更多</div><div class="a " style="left:2.4px;top:369px;width:1124.6px;height:1px;background:#edf0f6"></div><div class="t td" style="left:2.4000000000000057px;width:33.79999999999998px;text-align:center;top:352.52px">8</div><div class="t td" style="left:44.5px;top:352.52px;">250919005<span style="display:inline-block;vertical-align:-1px;margin-left:5px"><svg width="10" height="10" viewBox="0 0 10 10"><rect x="3" y="0.6" width="6.4" height="6.4" rx="1" fill="none" stroke="#8cc4fb" stroke-width="1"/><path d="M2 2.8H1.4A0.8 0.8 0 0 0 0.6 3.6V8.6A0.8 0.8 0 0 0 1.4 9.4H6.4A0.8 0.8 0 0 0 7.2 8.6V8" fill="none" stroke="#8cc4fb" stroke-width="1"/></svg></span></div><div class="t lnk" style="left:322px;top:352.52px;">自动诊断</div><div class="t td" style="left:386px;width:48px;text-align:center;top:352.52px">女</div><div class="t td" style="left:434px;width:48.5px;text-align:center;top:352.52px">未知</div><div class="t td" style="left:482.5px;width:49.0px;text-align:center;top:352.52px">27岁</div><div class="t td" style="left:531.5px;width:71.70000000000005px;text-align:center;top:352.52px">1998-01-01</div><div class="t " style="left:1054.5px;top:352.52px;color:#c8c9cc">删除</div><div class="t lnk" style="left:1087.6px;top:352.52px;">更多</div><div class="a " style="left:2.4px;top:392px;width:1124.6px;height:1px;background:#edf0f6"></div><div class="t td" style="left:2.4000000000000057px;width:33.79999999999998px;text-align:center;top:375.0px">9</div><div class="t td" style="left:44.5px;top:375.0px;">250919004<span style="display:inline-block;vertical-align:-1px;margin-left:5px"><svg width="10" height="10" viewBox="0 0 10 10"><rect x="3" y="0.6" width="6.4" height="6.4" rx="1" fill="none" stroke="#8cc4fb" stroke-width="1"/><path d="M2 2.8H1.4A0.8 0.8 0 0 0 0.6 3.6V8.6A0.8 0.8 0 0 0 1.4 9.4H6.4A0.8 0.8 0 0 0 7.2 8.6V8" fill="none" stroke="#8cc4fb" stroke-width="1"/></svg></span></div><div class="t lnk" style="left:322px;top:375.0px;">测试</div><div class="t td" style="left:386px;width:48px;text-align:center;top:375.0px">男</div><div class="t td" style="left:434px;width:48.5px;text-align:center;top:375.0px">未知</div><div class="t td" style="left:482.5px;width:49.0px;text-align:center;top:375.0px">44岁</div><div class="t td" style="left:531.5px;width:71.70000000000005px;text-align:center;top:375.0px">1981-01-01</div><div class="t td" style="left:754px;top:375.0px;">TEST1-高杰<span style="display:inline-block;vertical-align:-1px;margin-left:5px"><svg width="10" height="10" viewBox="0 0 10 10"><rect x="3" y="0.6" width="6.4" height="6.4" rx="1" fill="none" stroke="#8cc4fb" stroke-width="1"/><path d="M2 2.8H1.4A0.8 0.8 0 0 0 0.6 3.6V8.6A0.8 0.8 0 0 0 1.4 9.4H6.4A0.8 0.8 0 0 0 7.2 8.6V8" fill="none" stroke="#8cc4fb" stroke-width="1"/></svg></span></div><div class="t " style="left:1054.5px;top:375.0px;color:#f56c6c">删除</div><div class="t lnk" style="left:1087.6px;top:375.0px;">更多</div><div class="a " style="left:2.4px;top:414px;width:1124.6px;height:1px;background:#edf0f6"></div><div class="t td" style="left:2.4000000000000057px;width:33.79999999999998px;text-align:center;top:397.47px">10</div><div class="t td" style="left:44.5px;top:397.47px;">250919003<span style="display:inline-block;vertical-align:-1px;margin-left:5px"><svg width="10" height="10" viewBox="0 0 10 10"><rect x="3" y="0.6" width="6.4" height="6.4" rx="1" fill="none" stroke="#8cc4fb" stroke-width="1"/><path d="M2 2.8H1.4A0.8 0.8 0 0 0 0.6 3.6V8.6A0.8 0.8 0 0 0 1.4 9.4H6.4A0.8 0.8 0 0 0 7.2 8.6V8" fill="none" stroke="#8cc4fb" stroke-width="1"/></svg></span></div><div class="t lnk" style="left:322px;top:397.47px;">左眼裸眼</div><div class="t td" style="left:386px;width:48px;text-align:center;top:397.47px">女</div><div class="t td" style="left:434px;width:48.5px;text-align:center;top:397.47px">未知</div><div class="t td" style="left:482.5px;width:49.0px;text-align:center;top:397.47px">27岁</div><div class="t td" style="left:531.5px;width:71.70000000000005px;text-align:center;top:397.47px">1998-01-01</div><div class="t " style="left:1054.5px;top:397.47px;color:#c8c9cc">删除</div><div class="t lnk" style="left:1087.6px;top:397.47px;">更多</div><div class="a " style="left:2.4px;top:437px;width:1124.6px;height:1px;background:#edf0f6"></div><div class="t td" style="left:2.4000000000000057px;width:33.79999999999998px;text-align:center;top:419.94px">11</div><div class="t td" style="left:44.5px;top:419.94px;">250919002<span style="display:inline-block;vertical-align:-1px;margin-left:5px"><svg width="10" height="10" viewBox="0 0 10 10"><rect x="3" y="0.6" width="6.4" height="6.4" rx="1" fill="none" stroke="#8cc4fb" stroke-width="1"/><path d="M2 2.8H1.4A0.8 0.8 0 0 0 0.6 3.6V8.6A0.8 0.8 0 0 0 1.4 9.4H6.4A0.8 0.8 0 0 0 7.2 8.6V8" fill="none" stroke="#8cc4fb" stroke-width="1"/></svg></span></div><div class="t lnk" style="left:322px;top:419.94px;">自动诊断测试</div><div class="t td" style="left:386px;width:48px;text-align:center;top:419.94px">女</div><div class="t td" style="left:434px;width:48.5px;text-align:center;top:419.94px">未知</div><div class="t td" style="left:482.5px;width:49.0px;text-align:center;top:419.94px">26岁</div><div class="t td" style="left:531.5px;width:71.70000000000005px;text-align:center;top:419.94px">1999-01-01</div><div class="t " style="left:1054.5px;top:419.94px;color:#c8c9cc">删除</div><div class="t lnk" style="left:1087.6px;top:419.94px;">更多</div><div class="a " style="left:2.4px;top:437.17px;width:1124.6px;height:22.47px;background:#ebf2fb"></div><div class="a " style="left:2.4px;top:459px;width:1124.6px;height:1px;background:#edf0f6"></div><div class="t td" style="left:2.4000000000000057px;width:33.79999999999998px;text-align:center;top:442.4px">12</div><div class="t td" style="left:44.5px;top:442.4px;">250919001<span style="display:inline-block;vertical-align:-1px;margin-left:5px"><svg width="10" height="10" viewBox="0 0 10 10"><rect x="3" y="0.6" width="6.4" height="6.4" rx="1" fill="none" stroke="#8cc4fb" stroke-width="1"/><path d="M2 2.8H1.4A0.8 0.8 0 0 0 0.6 3.6V8.6A0.8 0.8 0 0 0 1.4 9.4H6.4A0.8 0.8 0 0 0 7.2 8.6V8" fill="none" stroke="#8cc4fb" stroke-width="1"/></svg></span></div><div class="t lnk" style="left:322px;top:442.4px;">杨过</div><div class="t td" style="left:386px;width:48px;text-align:center;top:442.4px">男</div><div class="t td" style="left:434px;width:48.5px;text-align:center;top:442.4px">未知</div><div class="t td" style="left:482.5px;width:49.0px;text-align:center;top:442.4px">37岁</div><div class="t td" style="left:531.5px;width:71.70000000000005px;text-align:center;top:442.4px">1988-09-17</div><div class="t td" style="left:611.3px;top:442.4px;">911586198809170012<span style="display:inline-block;vertical-align:-1px;margin-left:5px"><svg width="10" height="10" viewBox="0 0 10 10"><rect x="3" y="0.6" width="6.4" height="6.4" rx="1" fill="none" stroke="#8cc4fb" stroke-width="1"/><path d="M2 2.8H1.4A0.8 0.8 0 0 0 0.6 3.6V8.6A0.8 0.8 0 0 0 1.4 9.4H6.4A0.8 0.8 0 0 0 7.2 8.6V8" fill="none" stroke="#8cc4fb" stroke-width="1"/></svg></span></div><div class="t " style="left:1054.5px;top:442.4px;color:#f56c6c">删除</div><div class="t lnk" style="left:1087.6px;top:442.4px;">更多</div><div class="a " style="left:2.4px;top:482px;width:1124.6px;height:1px;background:#edf0f6"></div><div class="t td" style="left:2.4000000000000057px;width:33.79999999999998px;text-align:center;top:464.88px">13</div><div class="t td" style="left:44.5px;top:464.88px;">250918003<span style="display:inline-block;vertical-align:-1px;margin-left:5px"><svg width="10" height="10" viewBox="0 0 10 10"><rect x="3" y="0.6" width="6.4" height="6.4" rx="1" fill="none" stroke="#8cc4fb" stroke-width="1"/><path d="M2 2.8H1.4A0.8 0.8 0 0 0 0.6 3.6V8.6A0.8 0.8 0 0 0 1.4 9.4H6.4A0.8 0.8 0 0 0 7.2 8.6V8" fill="none" stroke="#8cc4fb" stroke-width="1"/></svg></span></div><div class="t lnk" style="left:322px;top:464.88px;">睿睿</div><div class="t td" style="left:386px;width:48px;text-align:center;top:464.88px">女</div><div class="t td" style="left:434px;width:48.5px;text-align:center;top:464.88px">未知</div><div class="t td" style="left:482.5px;width:49.0px;text-align:center;top:464.88px">27岁</div><div class="t td" style="left:531.5px;width:71.70000000000005px;text-align:center;top:464.88px">1998-01-01</div><div class="t " style="left:1054.5px;top:464.88px;color:#c8c9cc">删除</div><div class="t lnk" style="left:1087.6px;top:464.88px;">更多</div><div class="a " style="left:2.4px;top:504px;width:1124.6px;height:1px;background:#edf0f6"></div><div class="t td" style="left:2.4000000000000057px;width:33.79999999999998px;text-align:center;top:487.35px">14</div><div class="t td" style="left:44.5px;top:487.35px;">250918002<span style="display:inline-block;vertical-align:-1px;margin-left:5px"><svg width="10" height="10" viewBox="0 0 10 10"><rect x="3" y="0.6" width="6.4" height="6.4" rx="1" fill="none" stroke="#8cc4fb" stroke-width="1"/><path d="M2 2.8H1.4A0.8 0.8 0 0 0 0.6 3.6V8.6A0.8 0.8 0 0 0 1.4 9.4H6.4A0.8 0.8 0 0 0 7.2 8.6V8" fill="none" stroke="#8cc4fb" stroke-width="1"/></svg></span></div><div class="t lnk" style="left:322px;top:487.35px;">高杰</div><div class="t td" style="left:386px;width:48px;text-align:center;top:487.35px">男</div><div class="t td" style="left:434px;width:48.5px;text-align:center;top:487.35px">未知</div><div class="t td" style="left:482.5px;width:49.0px;text-align:center;top:487.35px">1岁</div><div class="t td" style="left:531.5px;width:71.70000000000005px;text-align:center;top:487.35px">2024-01-01</div><div class="t " style="left:1054.5px;top:487.35px;color:#f56c6c">删除</div><div class="t lnk" style="left:1087.6px;top:487.35px;">更多</div><div class="a " style="left:2.4px;top:527px;width:1124.6px;height:1px;background:#edf0f6"></div><div class="t td" style="left:2.4000000000000057px;width:33.79999999999998px;text-align:center;top:509.81px">15</div><div class="t td" style="left:44.5px;top:509.81px;">250918001<span style="display:inline-block;vertical-align:-1px;margin-left:5px"><svg width="10" height="10" viewBox="0 0 10 10"><rect x="3" y="0.6" width="6.4" height="6.4" rx="1" fill="none" stroke="#8cc4fb" stroke-width="1"/><path d="M2 2.8H1.4A0.8 0.8 0 0 0 0.6 3.6V8.6A0.8 0.8 0 0 0 1.4 9.4H6.4A0.8 0.8 0 0 0 7.2 8.6V8" fill="none" stroke="#8cc4fb" stroke-width="1"/></svg></span></div><div class="t lnk" style="left:322px;top:509.81px;">雪雪</div><div class="t td" style="left:386px;width:48px;text-align:center;top:509.81px">女</div><div class="t td" style="left:434px;width:48.5px;text-align:center;top:509.81px">未知</div><div class="t td" style="left:482.5px;width:49.0px;text-align:center;top:509.81px">27岁</div><div class="t td" style="left:531.5px;width:71.70000000000005px;text-align:center;top:509.81px">1998-01-01</div><div class="t " style="left:1054.5px;top:509.81px;color:#f56c6c">删除</div><div class="t lnk" style="left:1087.6px;top:509.81px;">更多</div><div class="a " style="left:2.4px;top:549px;width:1124.6px;height:1px;background:#edf0f6"></div><div class="t td" style="left:2.4000000000000057px;width:33.79999999999998px;text-align:center;top:532.28px">16</div><div class="t td" style="left:44.5px;top:532.28px;">250917011<span style="display:inline-block;vertical-align:-1px;margin-left:5px"><svg width="10" height="10" viewBox="0 0 10 10"><rect x="3" y="0.6" width="6.4" height="6.4" rx="1" fill="none" stroke="#8cc4fb" stroke-width="1"/><path d="M2 2.8H1.4A0.8 0.8 0 0 0 0.6 3.6V8.6A0.8 0.8 0 0 0 1.4 9.4H6.4A0.8 0.8 0 0 0 7.2 8.6V8" fill="none" stroke="#8cc4fb" stroke-width="1"/></svg></span></div><div class="t td" style="left:172px;top:532.28px;">陈欣欣</div><div class="a " style="left:231.5px;top:533.28px;width:11px;height:10px;"><svg width="11" height="10" viewBox="0 0 11 10"><circle cx="4.3" cy="2.9" r="2.3" fill="#f0252d"/><path d="M0.6 9.2Q0.6 6.2 3.2 5.6H5.6Q7.3 6 7.4 7.2L6.2 9.4H1.2Z" fill="#f0252d"/><circle cx="7.9" cy="7.6" r="1.65" fill="#fff" stroke="#f0252d" stroke-width="1.2"/></svg></div><div class="t lnk" style="left:322px;top:532.28px;">妮妮</div><div class="t td" style="left:386px;width:48px;text-align:center;top:532.28px">女</div><div class="t td" style="left:434px;width:48.5px;text-align:center;top:532.28px">未知</div><div class="t td" style="left:482.5px;width:49.0px;text-align:center;top:532.28px">22岁</div><div class="t td" style="left:531.5px;width:71.70000000000005px;text-align:center;top:532.28px">2003-08-19</div><div class="t td" style="left:611.3px;top:532.28px;">230183200308191241<span style="display:inline-block;vertical-align:-1px;margin-left:5px"><svg width="10" height="10" viewBox="0 0 10 10"><rect x="3" y="0.6" width="6.4" height="6.4" rx="1" fill="none" stroke="#8cc4fb" stroke-width="1"/><path d="M2 2.8H1.4A0.8 0.8 0 0 0 0.6 3.6V8.6A0.8 0.8 0 0 0 1.4 9.4H6.4A0.8 0.8 0 0 0 7.2 8.6V8" fill="none" stroke="#8cc4fb" stroke-width="1"/></svg></span></div><div class="t td" style="left:754px;top:532.28px;">2025-杭州cxx<span style="display:inline-block;vertical-align:-1px;margin-left:5px"><svg width="10" height="10" viewBox="0 0 10 10"><rect x="3" y="0.6" width="6.4" height="6.4" rx="1" fill="none" stroke="#8cc4fb" stroke-width="1"/><path d="M2 2.8H1.4A0.8 0.8 0 0 0 0.6 3.6V8.6A0.8 0.8 0 0 0 1.4 9.4H6.4A0.8 0.8 0 0 0 7.2 8.6V8" fill="none" stroke="#8cc4fb" stroke-width="1"/></svg></span></div><div class="t " style="left:1054.5px;top:532.28px;color:#f56c6c">删除</div><div class="t lnk" style="left:1087.6px;top:532.28px;">更多</div><div class="a " style="left:2.4px;top:571px;width:1124.6px;height:1px;background:#edf0f6"></div><div class="t td" style="left:2.4000000000000057px;width:33.79999999999998px;text-align:center;top:554.75px">17</div><div class="t td" style="left:44.5px;top:554.75px;">250917010<span style="display:inline-block;vertical-align:-1px;margin-left:5px"><svg width="10" height="10" viewBox="0 0 10 10"><rect x="3" y="0.6" width="6.4" height="6.4" rx="1" fill="none" stroke="#8cc4fb" stroke-width="1"/><path d="M2 2.8H1.4A0.8 0.8 0 0 0 0.6 3.6V8.6A0.8 0.8 0 0 0 1.4 9.4H6.4A0.8 0.8 0 0 0 7.2 8.6V8" fill="none" stroke="#8cc4fb" stroke-width="1"/></svg></span></div><div class="t td" style="left:172px;top:554.75px;">陈欣欣</div><div class="t lnk" style="left:322px;top:554.75px;">弃单测试</div><div class="t td" style="left:386px;width:48px;text-align:center;top:554.75px">女</div><div class="t td" style="left:434px;width:48.5px;text-align:center;top:554.75px">未知</div><div class="t td" style="left:482.5px;width:49.0px;text-align:center;top:554.75px">24岁</div><div class="t td" style="left:531.5px;width:71.70000000000005px;text-align:center;top:554.75px">2001-01-01</div><div class="t td" style="left:754px;top:554.75px;">2025-弃单单位<span style="display:inline-block;vertical-align:-1px;margin-left:5px"><svg width="10" height="10" viewBox="0 0 10 10"><rect x="3" y="0.6" width="6.4" height="6.4" rx="1" fill="none" stroke="#8cc4fb" stroke-width="1"/><path d="M2 2.8H1.4A0.8 0.8 0 0 0 0.6 3.6V8.6A0.8 0.8 0 0 0 1.4 9.4H6.4A0.8 0.8 0 0 0 7.2 8.6V8" fill="none" stroke="#8cc4fb" stroke-width="1"/></svg></span></div><div class="t " style="left:1054.5px;top:554.75px;color:#f56c6c">删除</div><div class="t lnk" style="left:1087.6px;top:554.75px;">更多</div><div class="a " style="left:36px;top:163.6px;width:1px;height:411.1px;background:#eef0f6"></div><div class="a " style="left:164px;top:163.6px;width:1px;height:411.1px;background:#eef0f6"></div><div class="a " style="left:223px;top:163.6px;width:1px;height:411.1px;background:#eef0f6"></div><div class="a " style="left:314px;top:163.6px;width:1px;height:411.1px;background:#eef0f6"></div><div class="a " style="left:386px;top:163.6px;width:1px;height:411.1px;background:#eef0f6"></div><div class="a " style="left:434px;top:163.6px;width:1px;height:411.1px;background:#eef0f6"></div><div class="a " style="left:482px;top:163.6px;width:1px;height:411.1px;background:#eef0f6"></div><div class="a " style="left:531px;top:163.6px;width:1px;height:411.1px;background:#eef0f6"></div><div class="a " style="left:603px;top:163.6px;width:1px;height:411.1px;background:#eef0f6"></div><div class="a " style="left:745px;top:163.6px;width:1px;height:411.1px;background:#eef0f6"></div><div class="a " style="left:933px;top:163.6px;width:1px;height:411.1px;background:#eef0f6"></div><div class="a " style="left:224px;top:208px;width:23.5px;height:27px;border:1.5px solid #ea1d25"></div><div class="a " style="left:14.8px;top:170.6px;width:10px;height:11px;"><svg width="10" height="11" viewBox="0 0 10 11"><rect x="0.7" y="0.7" width="8.6" height="9.6" rx="0.8" fill="none" stroke="#555" stroke-width="1.2"/><path d="M3 1V10" stroke="#555" stroke-width="1"/><path d="M4.8 3.3H7.8M4.8 5.5H7.8M4.8 7.7H7.8" stroke="#555" stroke-width="1.1"/></svg></div><div class="t th" style="left:44.5px;top:169.8px;">体检号<span style="display:inline-block;vertical-align:-1.5px;margin-left:0.5px"><svg width="6.5" height="10" viewBox="0 0 6.5 10"><path d="M0.3 4.1L3.25 0.9L6.2 4.1Z" fill="#c8cbd1"/><path d="M0.3 5.9L3.25 9.1L6.2 5.9Z" fill="#c0c4cc"/></svg></span></div><div class="t th" style="left:172px;top:169.8px;">业务员</div><div class="t th" style="left:232px;top:169.8px;">图标</div><div class="t th" style="left:322px;top:169.8px;">姓名<span style="display:inline-block;vertical-align:-1.5px;margin-left:0.5px"><svg width="6.5" height="10" viewBox="0 0 6.5 10"><path d="M0.3 4.1L3.25 0.9L6.2 4.1Z" fill="#c8cbd1"/><path d="M0.3 5.9L3.25 9.1L6.2 5.9Z" fill="#c0c4cc"/></svg></span></div><div class="t th" style="left:394px;top:169.8px;">性别<span style="display:inline-block;vertical-align:-1.5px;margin-left:0.5px"><svg width="6.5" height="10" viewBox="0 0 6.5 10"><path d="M0.3 4.1L3.25 0.9L6.2 4.1Z" fill="#c8cbd1"/><path d="M0.3 5.9L3.25 9.1L6.2 5.9Z" fill="#c0c4cc"/></svg></span></div><div class="t th" style="left:442.5px;top:169.8px;">婚姻<span style="display:inline-block;vertical-align:-1.5px;margin-left:0.5px"><svg width="6.5" height="10" viewBox="0 0 6.5 10"><path d="M0.3 4.1L3.25 0.9L6.2 4.1Z" fill="#c8cbd1"/><path d="M0.3 5.9L3.25 9.1L6.2 5.9Z" fill="#c0c4cc"/></svg></span></div><div class="t th" style="left:491.3px;top:169.8px;">年龄<span style="display:inline-block;vertical-align:-1.5px;margin-left:0.5px"><svg width="6.5" height="10" viewBox="0 0 6.5 10"><path d="M0.3 4.1L3.25 0.9L6.2 4.1Z" fill="#c8cbd1"/><path d="M0.3 5.9L3.25 9.1L6.2 5.9Z" fill="#c0c4cc"/></svg></span></div><div class="t th" style="left:541.3px;top:169.8px;">出生日期<span style="display:inline-block;vertical-align:-1.5px;margin-left:0.5px"><svg width="6.5" height="10" viewBox="0 0 6.5 10"><path d="M0.3 4.1L3.25 0.9L6.2 4.1Z" fill="#c8cbd1"/><path d="M0.3 5.9L3.25 9.1L6.2 5.9Z" fill="#c0c4cc"/></svg></span></div><div class="t th" style="left:611.5px;top:169.8px;">证件号</div><div class="t th" style="left:754px;top:169.8px;">单位订单<span style="display:inline-block;vertical-align:-1.5px;margin-left:0.5px"><svg width="6.5" height="10" viewBox="0 0 6.5 10"><path d="M0.3 4.1L3.25 0.9L6.2 4.1Z" fill="#c8cbd1"/><path d="M0.3 5.9L3.25 9.1L6.2 5.9Z" fill="#c0c4cc"/></svg></span></div><div class="t th" style="left:980px;top:169.8px;">导检诊室</div><div class="t th" style="left:1071.3px;top:169.8px;">操作</div><div class="a " style="left:1030px;top:163.6px;width:6px;height:412.4px;background:linear-gradient(to right, rgba(0,0,0,0), rgba(0,0,0,0.05))"></div><div class="a " style="left:1036px;top:163.6px;width:1px;height:412.4px;background:#e8e8ec"></div><div class="a " style="left:1036px;top:575.5px;width:98.7px;height:1px;background:#ebeef5"></div><div class="a " style="left:1127px;top:163.6px;width:7.5px;height:412.4px;background:#fff;border-left:1px solid #ebeef5"></div><div class="a " style="left:1128px;top:190.4px;width:5.5px;height:41px;background:#d6d6d6;border-radius:3px"></div><div class="a " style="left:3.2px;top:575.3px;width:592.5px;height:6px;background:#dcdcdc;border-radius:3px"></div><div class="a " style="left:2.4px;top:581.7px;width:1132.3px;height:1px;background:#ebeef5"></div><div class="a " style="left:1133.7px;top:163.6px;width:1px;height:419.1px;background:#ebeef5"></div><div class="t " style="left:808.6px;top:590.95px;color:#555">共 159 条</div><div class="a " style="left:865.4px;top:586.3px;width:74px;height:21.3px;border:1px solid #dfe1e6;border-radius:3px"><div class="t" style="left:8px;top:3.5px;color:#444">200条/页</div><div class="a" style="right:6.5px;top:8.5px"><svg width="7" height="4" viewBox="0 0 7 4"><path d="M0.5 0.5L3.5 3.5L6.5 0.5" fill="none" stroke="#c0c4cc" stroke-width="0.9"/></svg></div></div><div class="a " style="left:955.4px;top:586.3px;width:21.6px;height:21.3px;background:#f0f2f5;border-radius:2px"><svg style="margin:5.5px 0 0 7.5px" width="5" height="9" viewBox="0 0 5 9"><path d="M4.5 0.5L0.7 4.5L4.5 8.5" fill="none" stroke="#c0c4cc" stroke-width="1"/></svg></div><div class="a " style="left:985px;top:586.3px;width:21.8px;height:21.3px;background:#1890ff;border-radius:2px"><div class="t" style="left:0;width:21.8px;text-align:center;top:4px;color:#fff;font-weight:bold">1</div></div><div class="a " style="left:1015.2px;top:586.3px;width:21.7px;height:21.3px;background:#f0f2f5;border-radius:2px"><svg style="margin:5.5px 0 0 8.5px" width="5" height="9" viewBox="0 0 5 9"><path d="M0.5 0.5L4.3 4.5L0.5 8.5" fill="none" stroke="#c0c4cc" stroke-width="1"/></svg></div><div class="t " style="left:1058.8px;top:590.95px;color:#555">前往</div><div class="a " style="left:1083.3px;top:586.3px;width:34.3px;height:21.3px;border:1px solid #dfe1e6;border-radius:3px"><div class="t" style="left:0;width:32px;text-align:center;top:4px;color:#444">1</div></div><div class="t " style="left:1119.9px;top:590.95px;color:#555">页</div></div>
<div class="a " style="left:1276.6px;top:33px;width:1.4px;height:586px;background:#e4e4e4"></div>
<div class="a " style="left:1266px;top:224.5px;width:1px;height:1.2px;background:#9a9a9a"></div>
<div class="a " style="left:1266px;top:228.5px;width:1px;height:1.2px;background:#9a9a9a"></div>
<div class="a " style="left:1266px;top:246.5px;width:1px;height:1.2px;background:#9a9a9a"></div>
<div class="a " style="left:1266px;top:250.5px;width:1px;height:1.2px;background:#9a9a9a"></div>
<div class="a " style="left:1266px;top:471.5px;width:1px;height:1.2px;background:#9a9a9a"></div>
<div class="a " style="left:1266px;top:475.5px;width:1px;height:1.2px;background:#9a9a9a"></div>
<div class="a " style="left:1266px;top:516.5px;width:1px;height:1.2px;background:#9a9a9a"></div>
<div class="a " style="left:1266px;top:520.5px;width:1px;height:1.2px;background:#9a9a9a"></div>
</body></html>
